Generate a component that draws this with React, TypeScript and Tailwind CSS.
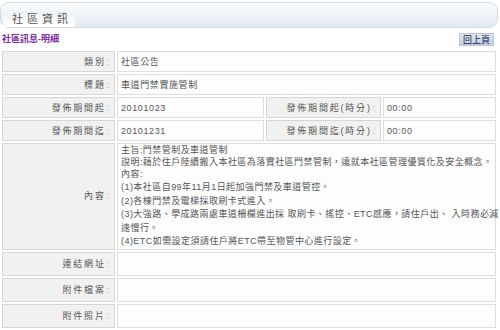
import React from "react";

const font = { fontFamily: '"Liberation Sans", "Noto Sans CJK TC", sans-serif' };

function Label({ children }: { children: React.ReactNode }) {
  return (
    <td className="border border-[#d6d6d6] bg-[#f1f1f1] text-right pr-[3px] text-[#555] align-middle whitespace-nowrap tracking-[1.8px]">
      {children}
      <span className="text-[#b5b5b5] ml-[1px]">:</span>
    </td>
  );
}

function Value({ children, colSpan }: { children?: React.ReactNode; colSpan?: number }) {
  return (
    <td colSpan={colSpan} className="border border-[#dedede] bg-[#fdfdfd] pl-[3px] text-[#555] align-middle tracking-[0.6px]">
      {children}
    </td>
  );
}

export default function App() {
  const lines: [string, string][] = [
    ["主旨:門禁管制及車道管制", "h-[12px]"],
    ["說明:藉於住戶陸續搬入本社區為落實社區門禁管制，遠就本社區管理優質化及安全概念。", "h-[12px]"],
    ["內容:", "h-[12px]"],
    ["(1)本社區自99年11月1日起加強門禁及車道管控。", "h-[13.5px] leading-[14.5px]"],
    ["(2)各棟門禁及電梯採取刷卡式進入。", "h-[13.5px] leading-[14.5px]"],
    ["(3)大強路、學成路兩處車道柵欄進出採 取刷卡、搖控、ETC感應，請住戶出、 入時務必減", "h-[13.5px] leading-[14.5px]"],
    ["速慢行。", "h-[13.5px] leading-[14.5px]"],
    ["(4)ETC如需設定須請住戶將ETC帶至物管中心進行設定。", "h-[13.5px] leading-[14.5px]"],
  ];
  return (
    <div className="w-[500px] h-[330px] bg-white overflow-hidden text-[9px] leading-[12px]" style={font}>
      <div className="mt-[2px] h-[26px] w-[498px] rounded-[9px] border border-[#d3dbe3] bg-gradient-to-b from-[#fbfcfd] to-[#e2e9f1] flex items-end">
        <div className="ml-[2px] w-[72px] h-[16px] rounded-t-[7px] bg-gradient-to-b from-[#eef2f6] to-white flex items-center pl-[9px] text-[11px] leading-[14px] tracking-[4px] text-[#555] whitespace-nowrap">
          社區資訊
        </div>
      </div>
      <div className="flex items-center justify-between h-[20px] pl-[2px] pr-[6px] mt-[1px]">
        <span className="text-[#7a2a9c] text-[9px] font-bold">社區訊息-明細</span>
        <span className="px-[3px] h-[13px] leading-[12px] bg-gradient-to-b from-[#dfe8f4] to-[#bccde6] border border-[#b7c6dc] text-[#223] text-[9px]">
          回上頁
        </span>
      </div>
      <table className="ml-[0px] w-[498px] border-separate border-spacing-[2px] table-fixed">
        <colgroup>
          <col className="w-[113px]" />
          <col className="w-[147px]" />
          <col className="w-[115px]" />
          <col />
        </colgroup>
        <tbody>
          <tr className="h-[21px]">
            <Label>類別</Label>
            <Value colSpan={3}>社區公告</Value>
          </tr>
          <tr className="h-[21px]">
            <Label>標題</Label>
            <Value colSpan={3}>車道門禁實施管制</Value>
          </tr>
          <tr className="h-[21px]">
            <Label>發佈期間起</Label>
            <Value>20101023</Value>
            <Label>發佈期間起(時分)</Label>
            <Value>00:00</Value>
          </tr>
          <tr className="h-[21px]">
            <Label>發佈期間迄</Label>
            <Value>20101231</Value>
            <Label>發佈期間迄(時分)</Label>
            <Value>00:00</Value>
          </tr>
          <tr>
            <Label>內容</Label>
            <Value colSpan={3}>
              <div className="pt-[0px] pb-[1px]">
                {lines.map(([l, c], i) => (
                  <div key={i} className={"whitespace-nowrap tracking-[0.45px] " + c}>{l}</div>
                ))}
              </div>
            </Value>
          </tr>
          <tr className="h-[24px]">
            <Label>連結網址</Label>
            <Value colSpan={3} />
          </tr>
          <tr className="h-[24px]">
            <Label>附件檔案</Label>
            <Value colSpan={3} />
          </tr>
          <tr className="h-[24px]">
            <Label>附件照片</Label>
            <Value colSpan={3} />
          </tr>
        </tbody>
      </table>
    </div>
  );
}
